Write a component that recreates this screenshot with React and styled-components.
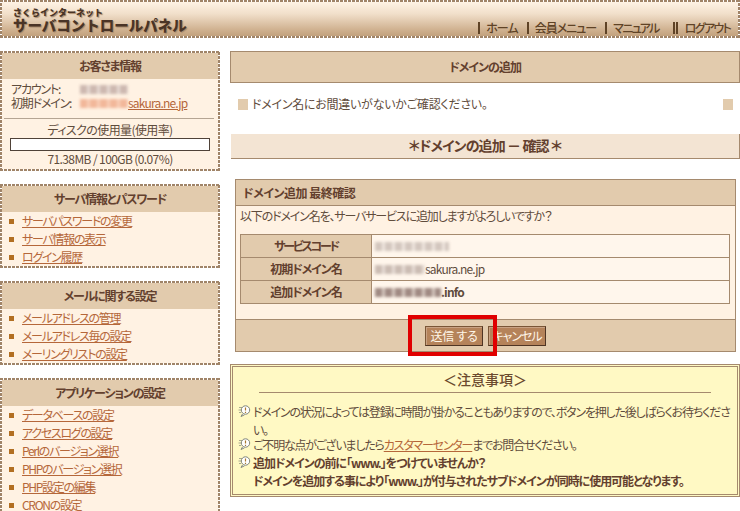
import styled, { createGlobalStyle, css } from "styled-components"

const GlobalStyle = createGlobalStyle`
    html, body {
        margin: 0;
        padding: 0;
        background: #fff;
        overflow: hidden;
    }
    body {
        font-family: "Noto Sans CJK JP", "Liberation Sans", sans-serif;
        font-size: 12px;
        line-height: 18px;
        color: #5f4c3c;
        font-feature-settings: "palt";
    }
    a {
        color: #b5673a;
        text-decoration: underline;
    }
`

// square dotted frame, the browser's own dotted border draws round dots
const dotFrame = fill => css`
    border: 2px solid transparent;
    background:
        repeating-linear-gradient(90deg, #a08468 0 3px, transparent 3px 4px) 0 0 / 100% 2px no-repeat border-box,
        repeating-linear-gradient(90deg, #a08468 0 3px, transparent 3px 4px) 0 100% / 100% 2px no-repeat border-box,
        repeating-linear-gradient(0deg, #a08468 0 3px, transparent 3px 4px) 0 0 / 2px 100% no-repeat border-box,
        repeating-linear-gradient(0deg, #a08468 0 3px, transparent 3px 4px) 100% 0 / 2px 100% no-repeat border-box,
        ${fill} padding-box;
`

const Page = styled.div`
    width: 740px;
    height: 511px;
    position: relative;
    overflow: hidden;
`

const Header = styled.header`
    height: 38px;
    box-sizing: border-box;
    ${dotFrame("linear-gradient(#fff3e4 0%, #f1dfca 35%, #cdae8c 85%, #c2a27e 100%)")}
    display: flex;
    justify-content: space-between;
    align-items: flex-end;
`

const Logo = styled.div`
    padding: 0 0 4px 11px;
    color: #4a3426;
    font-weight: 900;
    font-feature-settings: normal;
    text-shadow: 1px 1px 1px #a8896b;
`

const LogoSmall = styled.div`
    font-size: 9px;
    line-height: 9px;
`

const LogoBig = styled.div`
    font-size: 14.5px;
    line-height: 15px;
`

const Nav = styled.nav`
    display: flex;
    align-items: center;
    padding: 0 8px 1px 0;
    font-size: 12px;
    color: #5f4326;
    font-weight: 500;
`

const NavItem = styled.span`
    border-left: ${props => props.$double ? "5px double" : "2px solid"} #5f4326;
    height: 12px;
    line-height: 12px;
    margin-left: ${props => props.$gap || 0}px;
    padding-left: ${props => props.$double ? 7 : 6}px;
    margin-bottom: 1px;
    letter-spacing: ${props => props.$spacing || -1}px;
`

const Columns = styled.div`
    display: grid;
    grid-template-columns: 220px 510px;
    column-gap: 10px;
    padding-top: 13px;
`

const Sidebar = styled.aside`
    display: flex;
    flex-direction: column;
    gap: 13px;
`

const Card = styled.section`
    ${dotFrame("#fff2e3")}
    box-sizing: border-box;
    height: ${props => props.$h}px;
`

const CardTitle = styled.h3`
    margin: 0;
    height: 26px;
    line-height: 25px;
    background: #e2cbad;
    color: #63402e;
    font-size: 12px;
    font-weight: 700;
    letter-spacing: -1.2px;
    text-align: center;
`

const Account = styled.div`
    display: grid;
    grid-template-columns: 69px 1fr;
    padding: 3px 0 8px 7px;
    margin: 0 4px 0 2px;
    line-height: 14px;
    letter-spacing: -1.2px;
    border-bottom: 1px solid #b5a593;
`

const DomainCell = styled.span`
    display: flex;
    align-items: center;
    letter-spacing: -0.8px;
`

const Blur = styled.span`
    display: inline-block;
    width: ${props => props.$w}px;
    height: ${props => props.$h || 9}px;
    background:
        repeating-linear-gradient(90deg, ${props => props.$c} 0 7px, transparent 7px 10px),
        ${props => props.$bg};
    filter: blur(1.5px);
    flex: none;
`

const Disk = styled.div`
    text-align: center;
    line-height: 16px;
    padding-top: 3px;
    letter-spacing: -0.6px;
`

const Meter = styled.div`
    height: 13px;
    margin: 0 8px 0 8px;
    box-sizing: border-box;
    border: 1px solid #4f4238;
    background: #fff;
`

const MenuList = styled.ul`
    list-style: none;
    margin: 0;
    padding: 0 0 0 7px;
`

const MenuItem = styled.li`
    height: 18px;
    line-height: 18px;
    display: flex;
    align-items: center;
    gap: 8px;
    letter-spacing: -1.3px;

    &::before {
        content: "";
        width: 5px;
        height: 5px;
        background: #b26f22;
    }
`

const Main = styled.main`
    display: flex;
    flex-direction: column;
`

const PageTitle = styled.h1`
    margin: 0;
    height: 32px;
    box-sizing: border-box;
    border: 1px solid #a58a6e;
    background: #e2cbad;
    color: #63402e;
    font-size: 12px;
    line-height: 30px;
    font-weight: 700;
    letter-spacing: -1px;
    text-align: center;
`

const Message = styled.div`
    display: flex;
    align-items: center;
    justify-content: space-between;
    height: 51px;
    box-sizing: border-box;
    padding: 0 7px 9px 8px;
`

const MessageText = styled.span`
    flex: 1;
    padding-left: 4px;
    letter-spacing: -0.25px;
`

const Square = styled.span`
    width: 10px;
    height: 11px;
    background: #e2cbad;
`

const SubTitle = styled.h2`
    margin: 0 0 20px 1px;
    height: 25px;
    box-sizing: border-box;
    border-bottom: 1px solid #a58a6e;
    border-right: 1px solid #a58a6e;
    background: #f3e4d3;
    color: #63402e;
    font-size: 14px;
    line-height: 23px;
    font-weight: 700;
    letter-spacing: -0.9px;
    text-align: center;
`

const Panel = styled.section`
    margin: 0 4px 12px 5px;
    border: 1px solid #a58a6e;
    background: #fff2e3;
    height: 173px;
    box-sizing: border-box;
    display: flex;
    flex-direction: column;
`

const PanelHead = styled.h3`
    margin: 0;
    height: 26px;
    box-sizing: border-box;
    border-bottom: 1px solid #a58a6e;
    background: #e2cbad;
    color: #63402e;
    font-size: 12px;
    line-height: 25px;
    font-weight: 700;
    letter-spacing: -0.5px;
    padding-left: 7px;
`

const PanelText = styled.p`
    margin: 0;
    padding: 1px 0 0 4px;
    height: 28px;
    box-sizing: border-box;
    letter-spacing: -1.15px;
`

const InfoTable = styled.table`
    width: 490px;
    margin-left: 4px;
    border-collapse: collapse;
    table-layout: fixed;
`

const Label = styled.th`
    width: 130px;
    height: 22px;
    padding: 0;
    border: 1px solid #a58a6e;
    background: #e2cbad;
    color: #63402e;
    font-size: 12px;
    font-weight: 700;
    letter-spacing: ${props => props.$spacing || -1.1}px;
`

const Value = styled.td`
    height: 22px;
    padding: 0 0 0 3px;
    border: 1px solid #a58a6e;
    background: #fff6ec;
    letter-spacing: -0.8px;
    font-weight: ${props => props.$bold ? 700 : 400};
`

const ValueInner = styled.span`
    display: flex;
    align-items: center;
`

const PanelFoot = styled.div`
    margin-top: auto;
    height: 32px;
    box-sizing: border-box;
    border-top: 1px solid #a58a6e;
    background: #e2cbad;
    display: flex;
    justify-content: center;
    align-items: center;
    gap: 5px;
`

const Button = styled.button`
    width: 58px;
    height: 20px;
    padding: 0;
    box-sizing: border-box;
    border: 1px solid #7a5636;
    border-right-color: #4f3524;
    border-bottom-color: #4f3524;
    box-shadow: inset 1px 1px 0 #c9a283;
    background: #b5835a;
    color: #fff6e8;
    font-family: inherit;
    font-size: 12px;
    font-feature-settings: "palt";
    letter-spacing: ${props => props.$spacing}px;
    line-height: 16px;
`

const Highlight = styled.div`
    position: absolute;
    left: 408px;
    top: 315px;
    width: 89px;
    height: 41px;
    box-sizing: border-box;
    border: 4px solid #e00000;
`

const Notice = styled.section`
    height: 133px;
    box-sizing: border-box;
    border: 3px double #a58a6e;
    background: #fff9c4;
    padding: 0 5px 0 5px;
`

const NoticeTitle = styled.h3`
    margin: 0 21px 10px 21px;
    height: 26px;
    box-sizing: border-box;
    border-bottom: 1px solid #a58a6e;
    color: #6b4a2e;
    font-size: 14px;
    line-height: 24px;
    font-weight: 500;
    text-align: center;
`

const NoticeRow = styled.div`
    display: grid;
    grid-template-columns: 15px 1fr;
    line-height: 18px;
    white-space: nowrap;
    font-weight: ${props => props.$bold ? 700 : 400};
    color: ${props => props.$bold ? "#63402e" : "inherit"};
    letter-spacing: ${props => props.$bold ? -1.05 : -1.2}px;
    margin-top: ${props => props.$mt || 0}px;
`

const Bubble = () => (
    <svg width="13" height="12" viewBox="0 0 13 12" style={{ marginTop: 2 }}>
        <path d="M1 2.500h3M0.500 5h2.500M1 7.500h2" stroke="#a9a98f" strokeWidth="1" fill="none" />
        <circle cx="7.500" cy="5" r="4.200" fill="#fff" stroke="#7f8478" />
        <path d="M4.500 9l-1.500 2.500 3.500-1.700" fill="#fff" stroke="#7f8478" strokeWidth="1" />
        <path d="M7.500 2.500v3M7.500 6.800v1.200" stroke="#a8782c" strokeWidth="1.200" />
    </svg>
)

const menus = [
    { title: "サーバ情報とパスワード", h: 84, items: ["サーバパスワードの変更", "サーバ情報の表示", "ログイン履歴"] },
    { title: "メールに関する設定", h: 84, items: ["メールアドレスの管理", "メールアドレス毎の設定", "メーリングリストの設定"] },
    { title: "アプリケーションの設定", h: 150, items: ["データベースの設定", "アクセスログの設定", "Perlのバージョン選択", "PHPのバージョン選択", "PHP設定の編集", "CRONの設定"] },
]

export default function App() {
    return (
        <Page>
            <GlobalStyle />
            <Header>
                <Logo>
                    <LogoSmall>さくらインターネット</LogoSmall>
                    <LogoBig>サーバコントロールパネル</LogoBig>
                </Logo>
                <Nav>
                    <NavItem>ホーム</NavItem>
                    <NavItem $gap={9}>会員メニュー</NavItem>
                    <NavItem $gap={9} $spacing={-1.7}>マニュアル</NavItem>
                    <NavItem $gap={14} $spacing={-1.7} $double>ログアウト</NavItem>
                </Nav>
            </Header>
            <Columns>
                <Sidebar>
                    <Card $h={120}>
                        <CardTitle>お客さま情報</CardTitle>
                        <Account>
                            <span>アカウント:</span>
                            <DomainCell><Blur $w={48} $c="#cdb8b0" $bg="#e6dad4" /></DomainCell>
                            <span>初期ドメイン:</span>
                            <DomainCell><Blur $w={48} $c="#f2b79a" $bg="#f8cfb8" /><a href="#">sakura.ne.jp</a></DomainCell>
                        </Account>
                        <Disk>
                            ディスクの使用量(使用率)
                            <Meter />
                            71.38MB / 100GB (0.07%)
                        </Disk>
                    </Card>
                    {menus.map(menu => (
                        <Card $h={menu.h} key={menu.title}>
                            <CardTitle>{menu.title}</CardTitle>
                            <MenuList>
                                {menu.items.map(item => (
                                    <MenuItem key={item}><a href="#">{item}</a></MenuItem>
                                ))}
                            </MenuList>
                        </Card>
                    ))}
                </Sidebar>
                <Main>
                    <PageTitle>ドメインの追加</PageTitle>
                    <Message>
                        <Square />
                        <MessageText>ドメイン名にお間違いがないかご確認ください。</MessageText>
                        <Square />
                    </Message>
                    <SubTitle>＊ドメインの追加 － 確認 ＊</SubTitle>
                    <Panel>
                        <PanelHead>ドメイン追加 最終確認</PanelHead>
                        <PanelText>以下のドメイン名を、サーバサービスに追加しますがよろしいですか？</PanelText>
                        <InfoTable>
                            <tbody>
                                <tr>
                                    <Label $spacing={-2.2}>サービスコード</Label>
                                    <Value><ValueInner><Blur $w={74} $c="#d3c6be" $bg="#efe6df" /></ValueInner></Value>
                                </tr>
                                <tr>
                                    <Label>初期ドメイン名</Label>
                                    <Value><ValueInner><Blur $w={50} $c="#cbbcb3" $bg="#e8ddd6" />sakura.ne.jp</ValueInner></Value>
                                </tr>
                                <tr>
                                    <Label>追加ドメイン名</Label>
                                    <Value $bold><ValueInner><Blur $w={66} $c="#a08a83" $bg="#d6c8c0" />.info</ValueInner></Value>
                                </tr>
                            </tbody>
                        </InfoTable>
                        <PanelFoot>
                            <Button $spacing={-0.3}>送信 する</Button>
                            <Button $spacing={-1}>キャンセル</Button>
                        </PanelFoot>
                    </Panel>
                    <Notice>
                        <NoticeTitle>＜注意事項＞</NoticeTitle>
                        <NoticeRow>
                            <Bubble />
                            <span>ドメインの状況によっては登録に時間が掛かることもありますので、ボタンを押した後しばらくお待ちくださ<br />い。</span>
                        </NoticeRow>
                        <NoticeRow $mt={-3}>
                            <Bubble />
                            <span>ご不明な点がございましたら<a href="#">カスタマーセンター</a>までお問合せください。</span>
                        </NoticeRow>
                        <NoticeRow $bold>
                            <Bubble />
                            <span>追加ドメインの前に「www.」をつけていませんか？<br />ドメインを追加する事により「www.」が付与されたサブドメインが同時に使用可能となります。</span>
                        </NoticeRow>
                    </Notice>
                </Main>
            </Columns>
            <Highlight />
        </Page>
    )
}
